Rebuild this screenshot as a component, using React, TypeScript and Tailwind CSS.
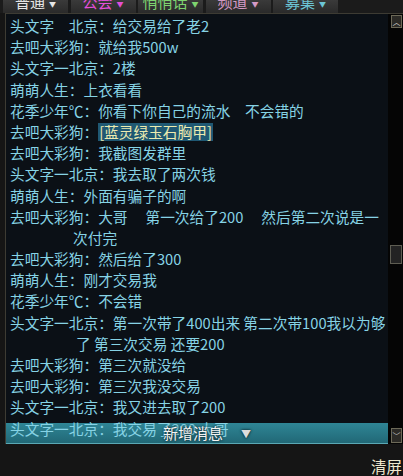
import React from "react";

const FONT = { fontFamily: '"Noto Sans CJK SC", "Noto Sans", sans-serif' };

const tabs = [
  { label: "普通", color: "text-[#e6e6e6]" },
  { label: "公会", color: "text-[#e24fd8]" },
  { label: "悄悄话", color: "text-[#7ed36f]" },
  { label: "频道", color: "text-[#d59ac6]" },
  { label: "募集", color: "text-[#6cc6d6]" },
];

type Line = { text: string; item?: string; indent?: string };

const lines: Line[] = [
  { text: "头文字　北京：给交易给了老2" },
  { text: "去吧大彩狗：就给我500w" },
  { text: "头文字一北京：2楼" },
  { text: "萌萌人生：上衣看看" },
  { text: "花季少年℃：你看下你自己的流水　不会错的" },
  { text: "去吧大彩狗：", item: "[蓝灵绿玉石胸甲]" },
  { text: "去吧大彩狗：我截图发群里" },
  { text: "头文字一北京：我去取了两次钱" },
  { text: "萌萌人生：外面有骗子的啊" },
  { text: "去吧大彩狗：大哥　 第一次给了200　 然后第二次说是一" },
  { text: "次付完", indent: "pl-[63px]" },
  { text: "去吧大彩狗：然后给了300" },
  { text: "萌萌人生：刚才交易我" },
  { text: "花季少年℃：不会错" },
  { text: "头文字一北京：第一次带了400出来 第二次带100我以为够" },
  { text: "了 第三次交易 还要200", indent: "pl-[66px]" },
  { text: "去吧大彩狗：第三次就没给" },
  { text: "去吧大彩狗：第三次我没交易" },
  { text: "头文字一北京：我又进去取了200" },
  { text: "头文字一北京：我交易了200 大哥" },
];

function ChatLine({ line }: { line: Line }) {
  return (
    <div className={`h-[21.2px] leading-[21.2px] whitespace-pre text-[#86d3e5] ${line.indent ?? ""}`}>
      {line.text}
      {line.item && (
        <span className="inline-block h-[18px] leading-[18px] bg-[#1f5873] text-[#ecebb0] px-px">
          {line.item}
        </span>
      )}
    </div>
  );
}

export default function App() {
  return (
    <div className="w-[403px] h-[476px] bg-[#151515] flex flex-col overflow-hidden text-[14.7px]" style={FONT}>
      {/* Tabs */}
      <div className="h-[13px] flex gap-[2.5px] pl-[3px] bg-[#1b1b1b] overflow-hidden">
        {tabs.map((t) => (
          <div
            key={t.label}
            className="w-[65px] h-[13px] bg-gradient-to-b from-[#3a3a3a] to-[#2a2a2a] flex justify-center overflow-hidden"
          >
            <span className={`-mt-[8px] leading-[20px] text-[15px] whitespace-nowrap ${t.color}`}>
              {t.label}
              <span className="text-[7px] ml-[4px] align-middle">▼</span>
            </span>
          </div>
        ))}
      </div>

      {/* Chat panel */}
      <div className="ml-[5px] h-[431px] flex border-t border-l border-[#3d3b33] bg-[#0b1016] relative">
        <div className="absolute left-0 right-[15px] bottom-0 h-[21px] bg-gradient-to-b from-[#2f8696] to-[#216876] border-b border-[#5aa8b4]" />
        <div className="flex-1 pl-[4px] pt-[1px] overflow-hidden relative">
          {lines.map((l, i) => (
            <ChatLine key={i} line={l} />
          ))}
        </div>
        <div className="absolute left-[157px] bottom-[1px] h-[20px] flex items-center gap-[18px] text-[#f4f4f4] text-[15px] [text-shadow:0_0_2px_#103038,0_0_3px_#103038]">
          <span>新增消息</span>
          <span className="text-[10px] text-[#dcdcdc]">▼</span>
        </div>

        {/* Scrollbar */}
        <div className="w-[15px] bg-[#050505] flex flex-col items-end pr-[1px]">
          <div className="mt-[1px] w-[11px] h-[13px] bg-[#2b2a26] border border-[#6c6958] flex items-center justify-center text-[#c8c8c8] text-[8px] leading-none">
            ︿
          </div>
          <div className="mt-[217px] w-[12px] h-[19px] bg-[#232323] border border-[#5e5d52]" />
          <div className="flex-1" />
          <div className="mb-[1px] w-[11px] h-[15px] bg-[#2b2a26] border border-[#6c6958] flex items-center justify-center text-[#c8c8c8] text-[8px] leading-none">
            ﹀
          </div>
        </div>
      </div>

      {/* Bottom */}
      <div className="flex-1 flex justify-end items-end pr-[1px] pb-[1px]">
        <span className="text-[#f1ead0] text-[15.5px] leading-[18px]">清屏</span>
      </div>
    </div>
  );
}
